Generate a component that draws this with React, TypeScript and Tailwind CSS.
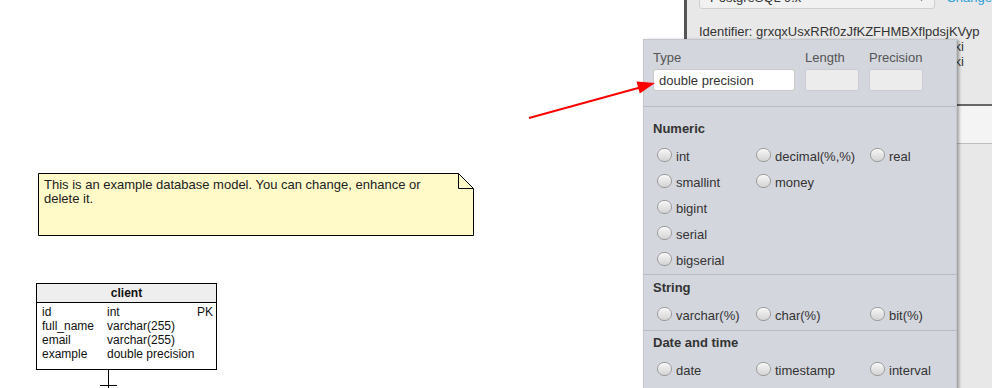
import React from "react";

const Radio = ({ label }: { label: string }) => (
  <div className="flex items-center h-[26px]">
    <span className="w-[15px] h-[14px] rounded-full border border-[#9a9a9a] bg-[linear-gradient(to_bottom,#f6f6f6,#d4d4d4)] shadow-[inset_0_1px_1px_rgba(255,255,255,0.8)] mb-[4px] mr-[4px] shrink-0" />
    <span className="text-[13px] text-[#333] leading-[26px]">{label}</span>
  </div>
);

const Section = ({
  title,
  rows,
  pt,
  pb,
}: {
  title: string;
  rows: string[][];
  pt: string;
  pb: string;
}) => (
  <div className={`border-t border-[#b8bbc3] ${pt} ${pb}`}>
    <div className="pl-[9px] text-[13px] font-bold text-[#333] leading-[16px]">{title}</div>
    <div className="mt-[7px] pl-[13px]">
      {rows.map((r, i) => (
        <div key={i} className="grid grid-cols-[99px_114px_1fr]">
          {r.map((l) => (
            <Radio key={l} label={l} />
          ))}
        </div>
      ))}
    </div>
  </div>
);

export default function App() {
  return (
    <div className="w-[992px] h-[388px] relative overflow-hidden bg-white font-['Liberation_Sans',Arial,sans-serif] flex">
      {/* Canvas */}
      <div className="flex-1 relative">
        {/* Note */}
        <div className="absolute left-[38px] top-[173px] w-[436px] h-[63px]">
          <svg className="absolute inset-0" width="436" height="63" viewBox="0 0 436 63">
            <path d="M0.5 0.5 H420.5 L435.5 15.5 V62.5 H0.5 Z" fill="#fffac8" stroke="#000" strokeWidth="1" />
            <path d="M420.5 0.5 V15.5 H435.5" fill="none" stroke="#000" strokeWidth="1" />
          </svg>
          <div className="relative pl-[6px] pt-[5px] w-[400px] text-[13px] leading-[14px] text-[#222]">
            This is an example database model. You can change, enhance or delete it.
          </div>
        </div>
        {/* Table */}
        <div className="absolute left-[36px] top-[283px] w-[181px] h-[87px] border border-black bg-white text-[12px] text-[#111]">
          <div className="h-[19px] bg-[#eeeeee] border-b border-black text-center font-bold leading-[18px]">client</div>
          <div className="pt-[2px] pl-[5px] pr-[3px] leading-[14px]">
            {[
              ["id", "int", "PK"],
              ["full_name", "varchar(255)", ""],
              ["email", "varchar(255)", ""],
              ["example", "double precision", ""],
            ].map(([a, b, c]) => (
              <div key={a} className="flex">
                <span className="w-[65px]">{a}</span>
                <span className="flex-1">{b}</span>
                <span>{c}</span>
              </div>
            ))}
          </div>
        </div>
        <svg className="absolute left-[96px] top-[370px]" width="26" height="18" viewBox="0 0 26 18">
          <line x1="12.5" y1="0" x2="12.5" y2="18" stroke="#000" strokeWidth="1" />
          <line x1="4" y1="15.5" x2="21" y2="15.5" stroke="#000" strokeWidth="1" />
        </svg>
      </div>

      {/* Right panel */}
      <div className="w-[308px] h-full border-l-[3px] border-[#555] bg-[#e8e8e8] text-[13px] text-[#333]">
        <div className="pl-[12px] flex items-end mt-[-21px]">
          <div className="w-[254px] h-[30px] border border-[#cfcfcf] rounded-[3px] bg-[#f1f1f1] flex items-end justify-between pb-[2px] pl-[10px] pr-[8px]">
            <span className="leading-[16px]">PostgreSQL 9.x</span>
            <span className="leading-[16px] text-[10px] text-[#444]">▼</span>
          </div>
          <span className="ml-[11px] pb-[3px] leading-[16px] text-[#2a9fd6]">Change</span>
        </div>
        <div className="pl-[12px] mt-[15px] leading-[15px]">
          <div className="whitespace-nowrap">Identifier: grxqxUsxRRf0zJfKZFHMBXflpdsjKVyp</div>
          <div className="w-[265px] text-right whitespace-nowrap">Documentation: see wiki</div>
          <div className="w-[265px] text-right whitespace-nowrap">Help: see our wiki</div>
        </div>
        <div className="mt-[35px] h-[2px] bg-[#666]" />
        <div className="h-[38px] bg-[#f4f4f4] border-b border-[#bdbdbd]" />
      </div>

      {/* Popup */}
      <div className="absolute left-[643px] top-[39px] w-[314px] h-[380px] bg-[#d3d6dd] border border-[#c3c6cd] shadow-[2px_1px_3px_rgba(0,0,0,0.35)]">
        <div className="pt-[10px] pl-[9px] pb-[15px] flex gap-[10px]">
          <div className="w-[142px]">
            <div className="text-[13px] leading-[16px] text-[#555]">Type</div>
            <div className="mt-[3px] h-[22px] border border-[#c8c8c8] rounded-[2px] bg-white pl-[5px] text-[13px] leading-[21px] text-[#333]">
              double precision
            </div>
          </div>
          <div className="w-[54px]">
            <div className="text-[13px] leading-[16px] text-[#555]">Length</div>
            <div className="mt-[3px] h-[22px] border border-[#c9cbd0] rounded-[2px] bg-[#ececec]" />
          </div>
          <div className="w-[54px]">
            <div className="text-[13px] leading-[16px] text-[#555]">Precision</div>
            <div className="mt-[3px] h-[22px] border border-[#c9cbd0] rounded-[2px] bg-[#ececec]" />
          </div>
        </div>
        <Section
          title="Numeric"
          pt="pt-[14px]"
          pb="pb-0"
          rows={[["int", "decimal(%,%)", "real"], ["smallint", "money"], ["bigint"], ["serial"], ["bigserial"]]}
        />
        <Section title="String" pt="pt-[5px]" pb="pb-[1px]" rows={[["varchar(%)", "char(%)", "bit(%)"]]} />
        <Section
          title="Date and time"
          pt="pt-[4px]"
          pb="pb-0"
          rows={[["date", "timestamp", "interval"], ["time", "timestamptz"]]}
        />
      </div>

      {/* Arrow */}
      <svg className="absolute inset-0 pointer-events-none" width="992" height="388" viewBox="0 0 992 388">
        <line x1="529" y1="118" x2="640" y2="87.5" stroke="#ff0000" strokeWidth="2" />
        <polygon points="655,83 636.5,81.5 639.8,93.6" fill="#ff0000" />
      </svg>
    </div>
  );
}
